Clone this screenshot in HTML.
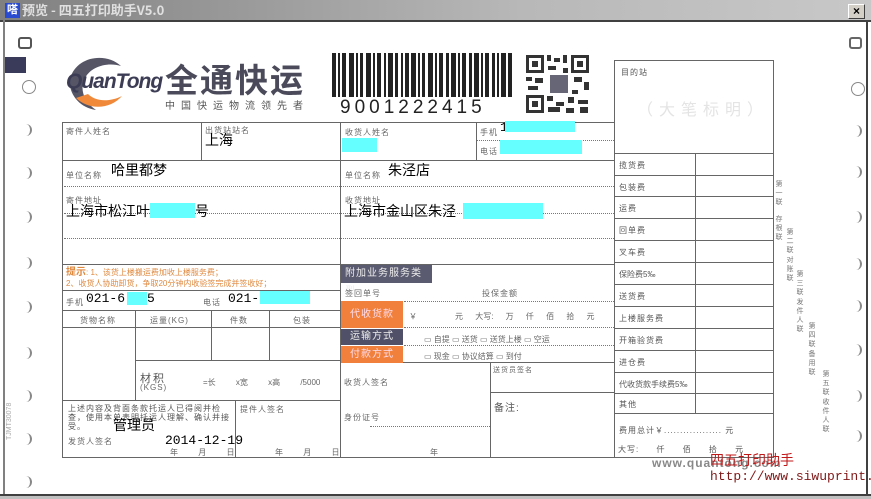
<!DOCTYPE html>
<html><head><meta charset="utf-8"><style>
*{margin:0;padding:0;box-sizing:border-box}
body{width:871px;height:499px;overflow:hidden;background:#fff;position:relative;font-family:"Liberation Sans","Noto Sans CJK SC",sans-serif;color:#000}
.a{position:absolute}
.l{position:absolute;background:#666}
.d{position:absolute;border-top:1px dotted #777;height:0}
.s{position:absolute;font-size:8px;color:#666;white-space:nowrap;letter-spacing:1px}
.v{position:absolute;font-size:14px;color:#000;white-space:nowrap;font-family:"Noto Sans CJK SC",sans-serif;line-height:1}
.c{position:absolute;background:#6ff}
.h{position:absolute;width:10px;height:12px;border-right:2px solid #888;border-radius:0 8px 8px 0}
.f{position:absolute;font-size:8px;color:#555;letter-spacing:1px}
.vt{position:absolute;font-size:7px;color:#777;width:8px;line-height:9px;text-align:center}
</style></head><body>
<!-- title bar -->
<div class="a" style="left:0;top:0;width:871px;height:20px;background:linear-gradient(90deg,#808080,#b8b8b8 60%,#c8c8c8)"></div>
<div class="a" style="left:5px;top:3px;width:15px;height:15px;background:#2a4bd0;color:#fff;font-size:11px;line-height:15px;text-align:center;font-weight:bold">嗒</div>
<div class="a" style="left:22px;top:2px;font-size:13px;font-weight:bold;color:#e0e0e0;font-family:'Noto Sans CJK SC',sans-serif;line-height:16px">预览 - 四五打印助手V5.0</div>
<div class="a" style="left:848px;top:4px;width:17px;height:15px;background:#d4d0c8;border:1px solid #fff;border-right-color:#404040;border-bottom-color:#404040;font-size:12px;line-height:12px;text-align:center;font-weight:bold">×</div>
<div class="a" style="left:0;top:20px;width:871px;height:2px;background:#404040"></div>
<div class="a" style="left:3px;top:20px;width:2px;height:479px;background:#808080"></div>
<div class="a" style="left:866px;top:20px;width:2px;height:479px;background:#404040"></div>
<div class="a" style="left:0;top:494px;width:871px;height:5px;background:#c0c0c0;border-top:2px solid #404040"></div>
<div class="a" style="left:5px;top:57px;width:21px;height:16px;background:#3a3a5a"></div>
<div class="a" style="left:18px;top:37px;width:14px;height:12px;border:2px solid #555;border-radius:3px"></div>
<div class="a" style="left:849px;top:37px;width:13px;height:12px;border:2px solid #666;border-radius:3px"></div>
<div class="a" style="left:22px;top:80px;width:14px;height:14px;border:1px solid #888;border-radius:50%"></div>
<div class="a" style="left:851px;top:82px;width:14px;height:14px;border:1px solid #888;border-radius:50%"></div>
<div class="h" style="left:22px;top:124px"></div><div class="h" style="left:22px;top:167px"></div><div class="h" style="left:22px;top:211px"></div><div class="h" style="left:22px;top:257px"></div><div class="h" style="left:22px;top:301px"></div><div class="h" style="left:22px;top:347px"></div><div class="h" style="left:22px;top:390px"></div><div class="h" style="left:22px;top:433px"></div><div class="h" style="left:22px;top:476px"></div>
<div class="h" style="left:852px;top:125px"></div><div class="h" style="left:852px;top:166px"></div><div class="h" style="left:852px;top:211px"></div><div class="h" style="left:852px;top:258px"></div><div class="h" style="left:852px;top:300px"></div><div class="h" style="left:852px;top:344px"></div><div class="h" style="left:852px;top:390px"></div><div class="h" style="left:852px;top:430px"></div>

<!-- logo -->
<svg class="a" style="left:66px;top:54px" width="60" height="60" viewBox="0 0 60 60"><path d="M55 12 C40 -2 10 2 4 25 C2 40 14 54 30 56 C18 48 14 36 18 26 C24 12 42 8 55 12Z" fill="#555566"/><path d="M10 44 C22 56 44 56 56 42 C44 48 30 48 22 40Z" fill="#f08a3a"/></svg>
<div class="a" style="left:66px;top:70px;font-size:21px;font-style:italic;font-weight:bold;color:#3c3c55;letter-spacing:-1px">QuanTong</div>
<div class="a" style="left:165px;top:58px;font-size:33px;font-weight:bold;color:#4a4a5a;font-family:'Noto Sans CJK SC',sans-serif;line-height:40px;letter-spacing:2px">全通快运</div>
<div class="a" style="left:165px;top:99px;font-size:10px;color:#555;font-family:'Noto Sans CJK SC',sans-serif;letter-spacing:6px;line-height:12px">中国快运物流领先者</div>
<!-- barcode -->
<svg class="a" style="left:0;top:0" width="871" height="499"><g fill="#222">
<rect x="332" y="53" width="4" height="44"/><rect x="338" y="53" width="2" height="44"/><rect x="342" y="53" width="4" height="44"/><rect x="349" y="53" width="5" height="44"/><rect x="356" y="53" width="2" height="44"/><rect x="360" y="53" width="3" height="44"/><rect x="366" y="53" width="5" height="44"/><rect x="373" y="53" width="2" height="44"/><rect x="377" y="53" width="4" height="44"/><rect x="384" y="53" width="2" height="44"/><rect x="388" y="53" width="5" height="44"/><rect x="395" y="53" width="3" height="44"/><rect x="401" y="53" width="2" height="44"/><rect x="405" y="53" width="4" height="44"/><rect x="411" y="53" width="5" height="44"/><rect x="418" y="53" width="2" height="44"/><rect x="422" y="53" width="3" height="44"/><rect x="428" y="53" width="5" height="44"/><rect x="435" y="53" width="2" height="44"/><rect x="439" y="53" width="4" height="44"/><rect x="446" y="53" width="3" height="44"/><rect x="451" y="53" width="5" height="44"/><rect x="458" y="53" width="2" height="44"/><rect x="462" y="53" width="4" height="44"/><rect x="469" y="53" width="3" height="44"/><rect x="474" y="53" width="5" height="44"/><rect x="481" y="53" width="2" height="44"/><rect x="485" y="53" width="4" height="44"/><rect x="492" y="53" width="3" height="44"/><rect x="497" y="53" width="2" height="44"/><rect x="501" y="53" width="5" height="44"/><rect x="508" y="53" width="4" height="44"/>
</g>
<g fill="#333"><rect x="526" y="55" width="18" height="18"/><rect x="571" y="55" width="18" height="18"/><rect x="526" y="95" width="18" height="18"/></g>
<g fill="#fff"><rect x="529" y="58" width="12" height="12"/><rect x="574" y="58" width="12" height="12"/><rect x="529" y="98" width="12" height="12"/></g>
<g fill="#333"><rect x="532" y="61" width="6" height="6"/><rect x="577" y="61" width="6" height="6"/><rect x="532" y="101" width="6" height="6"/>
<rect x="547" y="55" width="4" height="6"/><rect x="554" y="58" width="6" height="4"/><rect x="563" y="55" width="4" height="8"/><rect x="548" y="66" width="8" height="4"/><rect x="526" y="77" width="6" height="4"/><rect x="535" y="78" width="8" height="5"/><rect x="528" y="86" width="10" height="4"/><rect x="574" y="77" width="8" height="5"/><rect x="584" y="82" width="5" height="8"/><rect x="572" y="90" width="6" height="4"/><rect x="547" y="96" width="6" height="5"/><rect x="556" y="102" width="8" height="4"/><rect x="568" y="97" width="6" height="6"/><rect x="578" y="100" width="10" height="4"/><rect x="548" y="107" width="12" height="5"/><rect x="566" y="108" width="8" height="5"/><rect x="580" y="107" width="8" height="6"/><rect x="563" y="68" width="5" height="5"/></g>
<rect x="550" y="75" width="18" height="18" fill="#666677"/>
</svg>
<div class="a" style="left:340px;top:98px;font-size:19px;letter-spacing:4px;color:#222;line-height:20px">9001222415</div>

<!-- main table lines -->
<div class="l" style="left:62px;top:122px;width:553px;height:1px"></div>
<div class="l" style="left:62px;top:122px;width:1px;height:336px"></div>
<div class="l" style="left:62px;top:457px;width:712px;height:1px"></div>
<div class="l" style="left:340px;top:122px;width:1px;height:336px"></div>
<div class="l" style="left:614px;top:60px;width:1px;height:398px"></div>
<div class="l" style="left:201px;top:122px;width:1px;height:39px"></div>
<div class="l" style="left:476px;top:122px;width:1px;height:39px"></div>
<div class="l" style="left:62px;top:160px;width:553px;height:1px"></div>
<div class="d" style="left:477px;top:140px;width:137px"></div>
<div class="d" style="left:64px;top:186px;width:550px"></div>
<div class="d" style="left:64px;top:213px;width:550px"></div>
<div class="d" style="left:64px;top:238px;width:550px"></div>
<div class="l" style="left:62px;top:264px;width:553px;height:1px"></div>
<div class="l" style="left:62px;top:290px;width:278px;height:1px"></div>
<div class="l" style="left:62px;top:310px;width:278px;height:1px"></div>
<div class="l" style="left:62px;top:327px;width:278px;height:1px"></div>
<div class="l" style="left:135px;top:310px;width:1px;height:90px"></div>
<div class="l" style="left:211px;top:310px;width:1px;height:50px"></div>
<div class="l" style="left:269px;top:310px;width:1px;height:50px"></div>
<div class="l" style="left:135px;top:360px;width:205px;height:1px"></div>
<div class="l" style="left:62px;top:400px;width:278px;height:1px"></div>
<div class="l" style="left:235px;top:400px;width:1px;height:57px"></div>
<div class="l" style="left:340px;top:362px;width:275px;height:1px"></div>
<div class="l" style="left:490px;top:362px;width:1px;height:96px"></div>
<div class="l" style="left:490px;top:392px;width:125px;height:1px"></div>
<div class="d" style="left:404px;top:301px;width:210px"></div>
<div class="d" style="left:404px;top:327px;width:210px"></div>
<div class="d" style="left:404px;top:345px;width:210px"></div>
<div class="d" style="left:370px;top:426px;width:120px"></div>

<!-- right column -->
<div class="l" style="left:614px;top:60px;width:160px;height:1px"></div>
<div class="l" style="left:773px;top:60px;width:1px;height:398px"></div>
<div class="l" style="left:614px;top:153px;width:160px;height:1px"></div>
<div class="l" style="left:695px;top:153px;width:1px;height:260px"></div>
<div class="l" style="left:614px;top:175px;width:160px;height:1px"></div>
<div class="l" style="left:614px;top:196px;width:160px;height:1px"></div>
<div class="l" style="left:614px;top:218px;width:160px;height:1px"></div>
<div class="l" style="left:614px;top:240px;width:160px;height:1px"></div>
<div class="l" style="left:614px;top:262px;width:160px;height:1px"></div>
<div class="l" style="left:614px;top:284px;width:160px;height:1px"></div>
<div class="l" style="left:614px;top:306px;width:160px;height:1px"></div>
<div class="l" style="left:614px;top:328px;width:160px;height:1px"></div>
<div class="l" style="left:614px;top:350px;width:160px;height:1px"></div>
<div class="l" style="left:614px;top:372px;width:160px;height:1px"></div>
<div class="l" style="left:614px;top:393px;width:160px;height:1px"></div>
<div class="l" style="left:614px;top:413px;width:160px;height:1px"></div>
<div class="f" style="left:621px;top:67px">目的站</div>
<div class="a" style="left:637px;top:96px;font-size:16px;color:#e4e4e4;letter-spacing:6px">（大笔标明）</div>
<div class="f" style="left:619px;top:160px">揽货费</div>
<div class="f" style="left:619px;top:182px">包装费</div>
<div class="f" style="left:619px;top:203px">运费</div>
<div class="f" style="left:619px;top:225px">回单费</div>
<div class="f" style="left:619px;top:247px">叉车费</div>
<div class="f" style="left:619px;top:269px;letter-spacing:0">保险费5‰</div>
<div class="f" style="left:619px;top:291px">送货费</div>
<div class="f" style="left:619px;top:313px">上楼服务费</div>
<div class="f" style="left:619px;top:335px">开箱验货费</div>
<div class="f" style="left:619px;top:357px">进仓费</div>
<div class="f" style="left:619px;top:379px;letter-spacing:0">代收货款手续费5‰</div>
<div class="f" style="left:619px;top:399px">其他</div>
<div class="f" style="left:619px;top:425px">费用总计￥.................. 元</div>
<div class="f" style="left:618px;top:444px;word-spacing:14px">大写: 仟 佰 拾 元</div>

<!-- vertical labels -->
<div class="vt" style="left:775px;top:180px">第一联</div><div class="vt" style="left:775px;top:215px">存根联</div>
<div class="vt" style="left:786px;top:228px">第二联</div><div class="vt" style="left:786px;top:256px">对账联</div>
<div class="vt" style="left:796px;top:270px">第三联</div><div class="vt" style="left:796px;top:298px">发件人联</div>
<div class="vt" style="left:808px;top:322px">第四联</div><div class="vt" style="left:808px;top:350px">备用联</div>
<div class="vt" style="left:822px;top:370px">第五联</div><div class="vt" style="left:822px;top:398px">收件人联</div>

<!-- left labels and values -->
<div class="s" style="left:66px;top:126px">寄件人姓名</div>
<div class="s" style="left:205px;top:125px">出货站站名</div>
<div class="v" style="left:205px;top:133px">上海</div>
<div class="s" style="left:66px;top:170px">单位名称</div>
<div class="v" style="left:111px;top:163px">哈里都梦</div>
<div class="s" style="left:66px;top:195px">寄件地址</div>
<div class="v" style="left:66px;top:204px">上海市松江叶</div>
<div class="c" style="left:150px;top:203px;width:45px;height:15px"></div>
<div class="v" style="left:195px;top:204px">号</div>
<div class="a" style="left:66px;top:267px;font-size:8px;color:#e08a40;line-height:11px;white-space:nowrap"><b style="font-size:10px">提示</b>: 1、该货上楼搬运费加收上楼服务费；<br>2、收货人协助卸货，争取20分钟内收验签完成并签收好；</div>
<div class="s" style="left:66px;top:297px">手机</div>
<div class="v" style="left:86px;top:292px;font-family:'Liberation Mono',monospace;font-size:13px">021-6</div>
<div class="c" style="left:127px;top:292px;width:20px;height:13px"></div>
<div class="v" style="left:147px;top:292px;font-family:'Liberation Mono',monospace;font-size:13px">5</div>
<div class="s" style="left:203px;top:297px">电话</div>
<div class="v" style="left:228px;top:292px;font-family:'Liberation Mono',monospace;font-size:13px">021-</div>
<div class="c" style="left:260px;top:291px;width:50px;height:13px"></div>
<div class="s" style="left:80px;top:315px">货物名称</div>
<div class="s" style="left:150px;top:315px">运量(KG)</div>
<div class="s" style="left:230px;top:315px">件数</div>
<div class="s" style="left:293px;top:315px">包装</div>
<div class="a" style="left:140px;top:370px;font-size:11px;color:#555;letter-spacing:2px">材积</div>
<div class="s" style="left:140px;top:383px">(KGS)</div>
<div class="s" style="left:203px;top:377px;word-spacing:18px;letter-spacing:0">=长 x宽 x高 /5000</div>
<div class="a" style="left:68px;top:404px;font-size:8px;color:#555;line-height:9px;width:165px;letter-spacing:1px">上述内容及背面条款托运人已得阅并检查，使用本单表明托运人理解、确认并接受。</div>
<div class="v" style="left:113px;top:418px">管理员</div>
<div class="s" style="left:68px;top:436px">发货人签名</div>
<div class="v" style="left:165px;top:434px;font-family:'Liberation Mono',monospace;font-size:13px">2014-12-19</div>
<div class="s" style="left:170px;top:447px;word-spacing:16px">年 月 日</div>
<div class="s" style="left:240px;top:404px">提件人签名</div>
<div class="s" style="left:275px;top:447px;word-spacing:16px">年 月 日</div>

<!-- middle -->
<div class="s" style="left:345px;top:127px">收货人姓名</div>
<div class="c" style="left:342px;top:138px;width:35px;height:14px"></div>
<div class="s" style="left:480px;top:127px">手机</div>
<div class="v" style="left:500px;top:121px;font-family:'Liberation Mono',monospace;font-size:13px">1</div>
<div class="c" style="left:505px;top:121px;width:70px;height:11px"></div>
<div class="s" style="left:480px;top:146px">电话</div>
<div class="c" style="left:500px;top:140px;width:82px;height:14px"></div>
<div class="s" style="left:345px;top:170px">单位名称</div>
<div class="v" style="left:388px;top:163px">朱泾店</div>
<div class="s" style="left:345px;top:195px">收货地址</div>
<div class="v" style="left:344px;top:204px">上海市金山区朱泾</div>
<div class="c" style="left:463px;top:203px;width:80px;height:16px"></div>
<div class="a" style="left:341px;top:265px;width:91px;height:18px;background:#5a5a70;color:#eee;font-size:10px;line-height:18px;padding-left:4px;letter-spacing:1px">附加业务服务类型</div>
<div class="s" style="left:345px;top:288px">签回单号</div>
<div class="s" style="left:482px;top:288px">投保金额</div>
<div class="a" style="left:341px;top:301px;width:62px;height:27px;background:#f0803c;color:#fde;font-size:10px;line-height:27px;text-align:center;letter-spacing:1px">代收货款</div>
<div class="a" style="left:341px;top:329px;width:62px;height:16px;background:#505068;color:#eee;font-size:10px;line-height:16px;text-align:center;letter-spacing:1px">运输方式</div>
<div class="a" style="left:341px;top:346px;width:62px;height:17px;background:#f0803c;color:#fde;font-size:10px;line-height:17px;text-align:center;letter-spacing:1px">付款方式</div>
<div class="s" style="left:409px;top:311px">￥</div>
<div class="s" style="left:455px;top:311px;word-spacing:10px;letter-spacing:0">元 大写: 万 仟 佰 拾 元</div>
<div class="s" style="left:424px;top:334px;letter-spacing:0">▭ 自提 ▭ 送货 ▭ 送货上楼 ▭ 空运</div>
<div class="s" style="left:424px;top:351px;letter-spacing:0">▭ 现金 ▭ 协议结算 ▭ 到付</div>
<div class="s" style="left:344px;top:377px">收货人签名</div>
<div class="s" style="left:344px;top:412px">身份证号</div>
<div class="s" style="left:430px;top:447px">年</div>
<div class="s" style="left:493px;top:365px;font-size:7px">送货员签名</div>
<div class="a" style="left:494px;top:399px;font-size:10px;color:#555;letter-spacing:1px">备注:</div>

<div class="a" style="left:652px;top:456px;font-size:12px;color:#888;font-weight:bold;letter-spacing:1px">www.quantong.com</div>
<div class="a" style="left:710px;top:452px;font-size:14px;color:#c01818;line-height:16px;font-family:'Noto Sans CJK SC',sans-serif">四五打印助手</div>
<div class="a" style="left:710px;top:469px;font-size:13px;color:#801818;line-height:15px;font-family:'Liberation Mono',monospace;white-space:nowrap">http://www.siwuprint.co</div>
<div class="a" style="left:6px;top:440px;font-size:7px;color:#aaa;transform:rotate(-90deg);transform-origin:left top">TJMT30078</div>
</body></html>
